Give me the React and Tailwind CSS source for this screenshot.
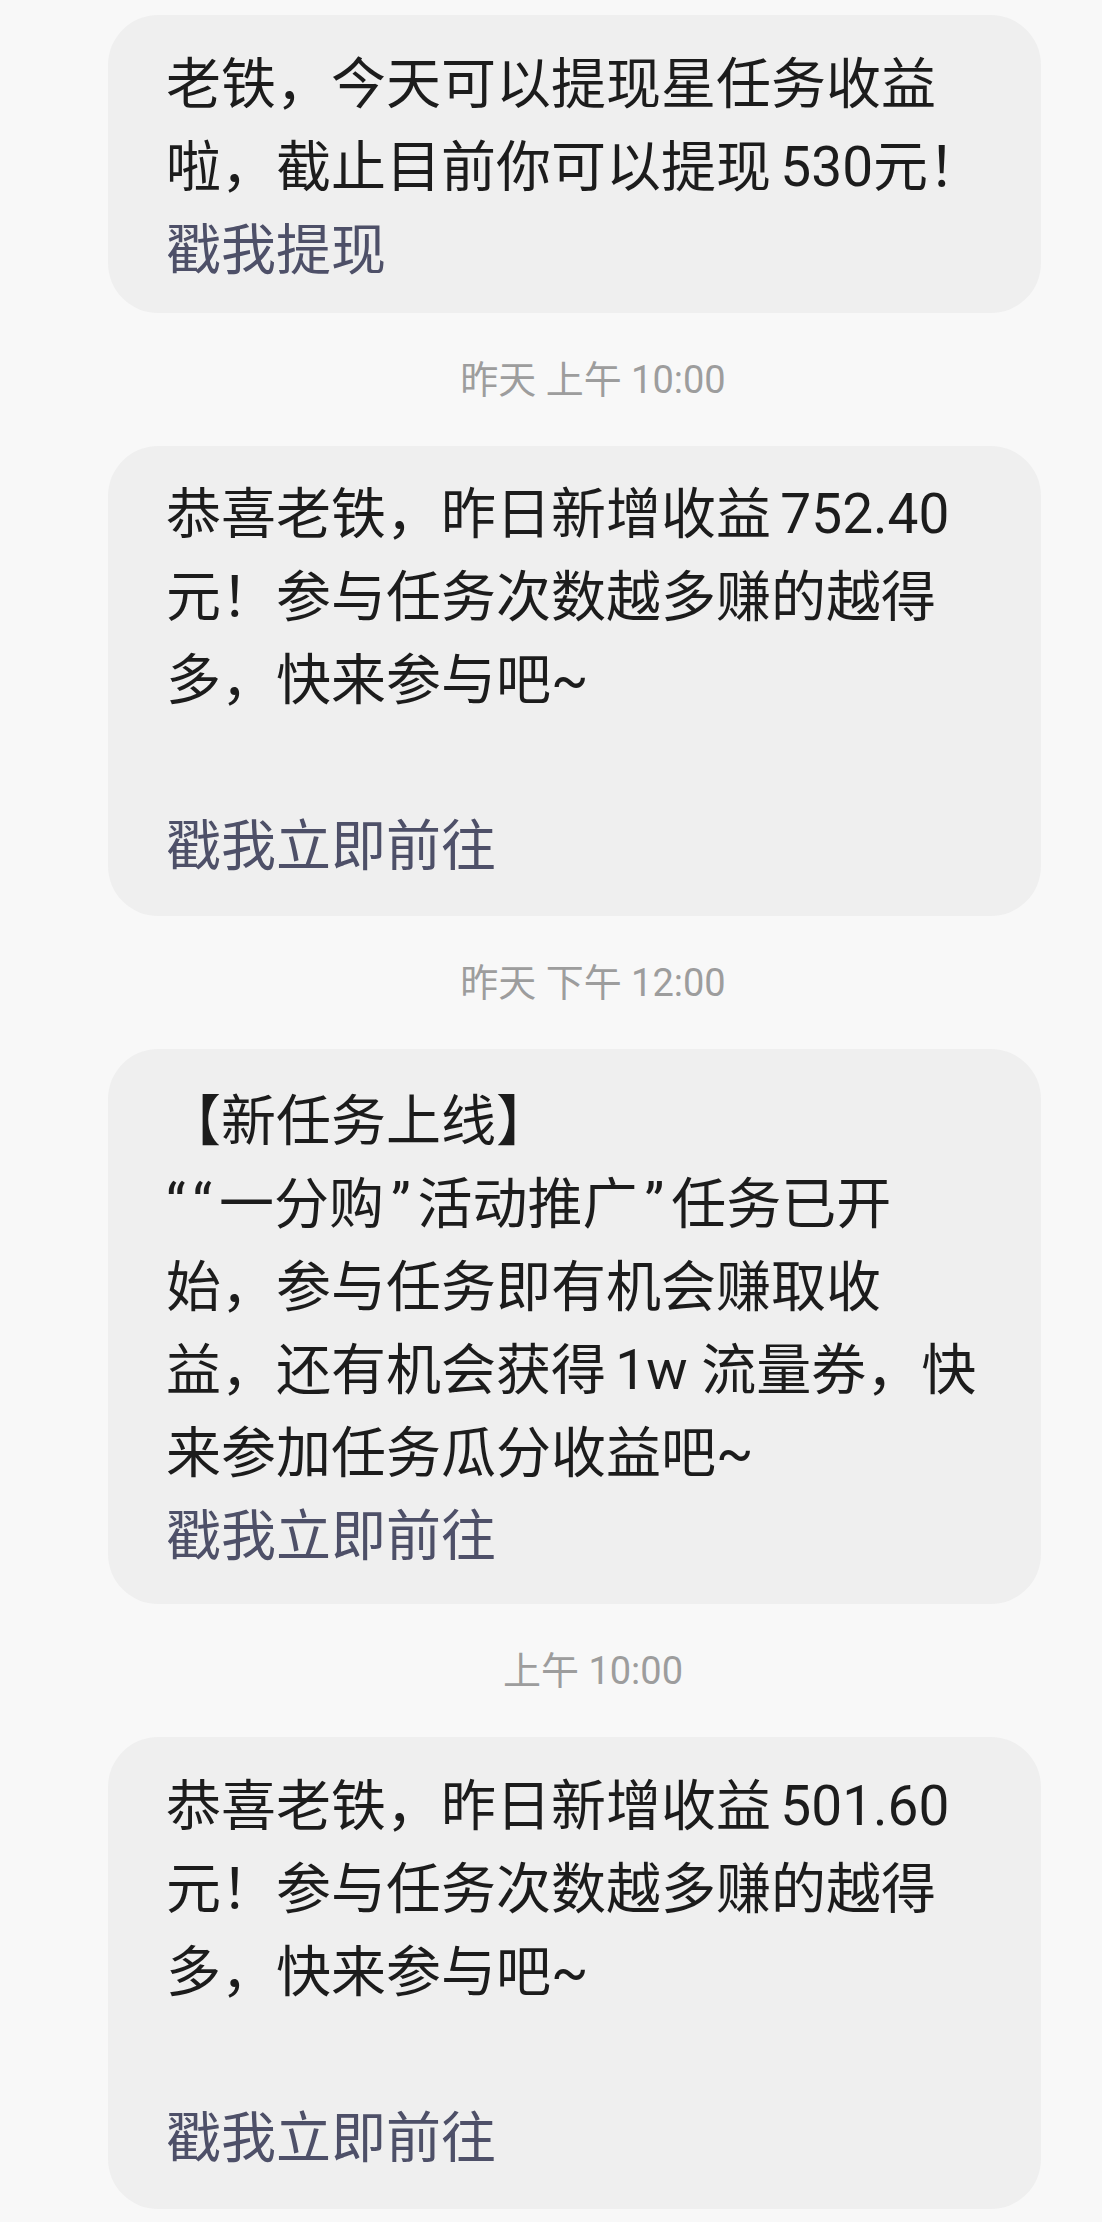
import React from 'react';

const Bubble = ({ lines, link, pad }) => {
  return (
    <div className={`ml-[108px] w-[933px] rounded-[50px] bg-[#efefef] pl-[58px] pr-6 ${pad}`}>
      {lines.map((line, i) => (
        <p key={i} className="h-[83px] whitespace-nowrap leading-[83px] text-[#1c1c1c]">
          {line}
        </p>
      ))}
      <p className="h-[83px] whitespace-nowrap leading-[83px] text-[#4e5068]">{link}</p>
    </div>
  );
};

// quotes in the source are spaced wider than the latin font draws them
const Q = ({ children }) => <span className="px-[7px]">{children}</span>;

const Stamp = ({ children }) => (
  <div className="mt-[42px] mb-[41px] flex h-[50px] items-center justify-center pl-[84px] text-[38px] text-[#9d9d9d]">
    {children}
  </div>
);

export default function App() {
  return (
    <div className="h-[2222px] overflow-hidden bg-[#f8f8f8] pt-[15px] font-['Roboto','Noto_Sans_CJK_SC',sans-serif] text-[55px]">
      <Bubble
        pad="pt-[28px] pb-[21px]"
        lines={['老铁，今天可以提现星任务收益', '啦，截止目前你可以提现\u2006530元！']}
        link="戳我提现"
      />
      <Stamp>昨天 上午 10:00</Stamp>
      <Bubble
        pad="pt-[27px] pb-[28px]"
        lines={['恭喜老铁，昨日新增收益\u2006752.40', '元！参与任务次数越多赚的越得', '多，快来参与吧~', '']}
        link="戳我立即前往"
      />
      <Stamp>昨天 下午 12:00</Stamp>
      <Bubble
        pad="pt-[31px] pb-[26px]"
        lines={[
          '【新任务上线】',
          <>
            “<Q>“</Q>一分购<Q>”</Q>活动推广<Q>”</Q>任务已开
          </>,
          '始，参与任务即有机会赚取收',
          '益，还有机会获得\u20061w 流量券，快',
          '来参加任务瓜分收益吧~',
        ]}
        link="戳我立即前往"
      />
      <Stamp>上午 10:00</Stamp>
      <Bubble
        pad="pt-[28px] pb-[29px]"
        lines={['恭喜老铁，昨日新增收益\u2006501.60', '元！参与任务次数越多赚的越得', '多，快来参与吧~', '']}
        link="戳我立即前往"
      />
    </div>
  );
}
